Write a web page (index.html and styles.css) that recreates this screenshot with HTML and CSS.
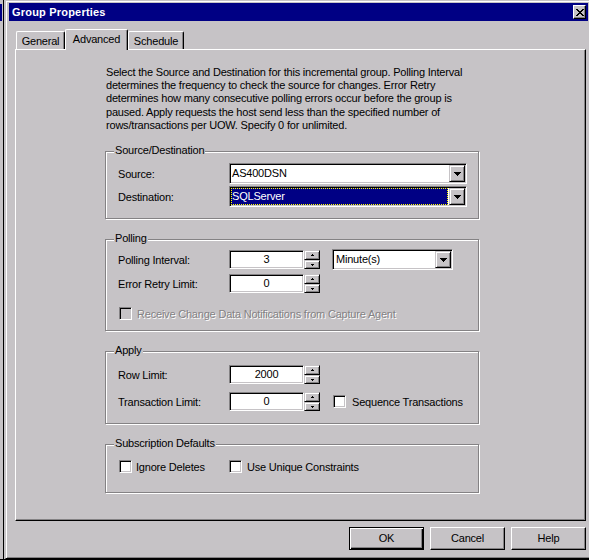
FILE: index.html
```html
<!DOCTYPE html>
<html>
<head>
<meta charset="utf-8">
<title>Group Properties</title>
<link rel="stylesheet" href="styles.css">
</head>
<body>
<div class="screen">
  <div class="behind"><div class="behind-title"></div></div>
  <div class="window">
    <div class="titlebar">
      <span class="title-text">Group Properties</span>
      <div class="close-btn">
        <svg width="8" height="7" viewBox="0 0 8 7" shape-rendering="crispEdges"><path d="M0 0h2v1H0zM6 0h2v1H6zM1 1h2v1H1zM5 1h2v1H5zM2 2h4v1H2zM3 3h2v1H3zM2 4h4v1H2zM1 5h2v1H1zM5 5h2v1H5zM0 6h2v1H0zM6 6h2v1H6z" fill="#000"/></svg>
      </div>
    </div>

    <div class="tabs">
      <div class="tab tab-general">General</div>
      <div class="tab tab-selected tab-advanced">Advanced</div>
      <div class="tab tab-schedule">Schedule</div>
    </div>

    <div class="panel">
      <div class="column">
        <p class="desc">Select the Source and Destination for this incremental group. Polling Interval<br>determines the frequency to check the source for changes. Error Retry<br>determines how many consecutive polling errors occur before the group is<br>paused. Apply requests the host send less than the specified number of<br>rows/transactions per UOW. Specify 0 for unlimited.</p>

        <div class="group group-src">
          <span class="group-label">Source/Destination</span>
          <div class="row row-combo">
            <span class="label">Source:</span>
            <div class="combo combo-wide">
              <span class="combo-text">AS400DSN</span>
              <span class="drop"><svg width="7" height="4" viewBox="0 0 7 4" shape-rendering="crispEdges"><path d="M0 0h7v1H0zM1 1h5v1H1zM2 2h3v1H2zM3 3h1v1H3z" fill="#000"/></svg></span>
            </div>
          </div>
          <div class="row row-combo">
            <span class="label">Destination:</span>
            <div class="combo combo-wide">
              <span class="combo-sel">SQLServer</span>
              <span class="drop"><svg width="7" height="4" viewBox="0 0 7 4" shape-rendering="crispEdges"><path d="M0 0h7v1H0zM1 1h5v1H1zM2 2h3v1H2zM3 3h1v1H3z" fill="#000"/></svg></span>
            </div>
          </div>
        </div>

        <div class="group group-poll">
          <span class="group-label">Polling</span>
          <div class="row row-interval">
            <span class="label">Polling Interval:</span>
            <div class="edit">3</div>
            <div class="spin">
              <span class="spin-btn spin-up"><svg width="3" height="2" viewBox="0 0 3 2" shape-rendering="crispEdges"><path d="M1 0h1v1H1zM0 1h3v1H0z" fill="#000"/></svg></span>
              <span class="spin-btn spin-down"><svg width="3" height="2" viewBox="0 0 3 2" shape-rendering="crispEdges"><path d="M0 0h3v1H0zM1 1h1v1H1z" fill="#000"/></svg></span>
            </div>
            <div class="combo combo-unit">
              <span class="combo-text combo-text-unit">Minute(s)</span>
              <span class="drop"><svg width="7" height="4" viewBox="0 0 7 4" shape-rendering="crispEdges"><path d="M0 0h7v1H0zM1 1h5v1H1zM2 2h3v1H2zM3 3h1v1H3z" fill="#000"/></svg></span>
            </div>
          </div>
          <div class="row row-retry">
            <span class="label">Error Retry Limit:</span>
            <div class="edit">0</div>
            <div class="spin">
              <span class="spin-btn spin-up"><svg width="3" height="2" viewBox="0 0 3 2" shape-rendering="crispEdges"><path d="M1 0h1v1H1zM0 1h3v1H0z" fill="#000"/></svg></span>
              <span class="spin-btn spin-down"><svg width="3" height="2" viewBox="0 0 3 2" shape-rendering="crispEdges"><path d="M0 0h3v1H0zM1 1h1v1H1z" fill="#000"/></svg></span>
            </div>
          </div>
          <div class="row row-notify">
            <span class="check check-disabled check-first"></span>
            <span class="check-text disabled-text">Receive Change Data Notifications from Capture Agent</span>
          </div>
        </div>

        <div class="group group-apply">
          <span class="group-label">Apply</span>
          <div class="row row-rowlimit">
            <span class="label">Row Limit:</span>
            <div class="edit">2000</div>
            <div class="spin">
              <span class="spin-btn spin-up"><svg width="3" height="2" viewBox="0 0 3 2" shape-rendering="crispEdges"><path d="M1 0h1v1H1zM0 1h3v1H0z" fill="#000"/></svg></span>
              <span class="spin-btn spin-down"><svg width="3" height="2" viewBox="0 0 3 2" shape-rendering="crispEdges"><path d="M0 0h3v1H0zM1 1h1v1H1z" fill="#000"/></svg></span>
            </div>
          </div>
          <div class="row row-translimit">
            <span class="label">Transaction Limit:</span>
            <div class="edit">0</div>
            <div class="spin">
              <span class="spin-btn spin-up"><svg width="3" height="2" viewBox="0 0 3 2" shape-rendering="crispEdges"><path d="M1 0h1v1H1zM0 1h3v1H0z" fill="#000"/></svg></span>
              <span class="spin-btn spin-down"><svg width="3" height="2" viewBox="0 0 3 2" shape-rendering="crispEdges"><path d="M0 0h3v1H0zM1 1h1v1H1z" fill="#000"/></svg></span>
            </div>
            <span class="check check-seq"></span>
            <span class="check-text check-text-seq">Sequence Transactions</span>
          </div>
        </div>

        <div class="group group-sub">
          <span class="group-label">Subscription Defaults</span>
          <div class="row row-subs">
            <div class="check-item">
              <span class="check check-first"></span>
              <span class="check-text check-text-ignore">Ignore Deletes</span>
            </div>
            <div class="check-item">
              <span class="check"></span>
              <span class="check-text">Use Unique Constraints</span>
            </div>
          </div>
        </div>
      </div>
    </div>

    <div class="buttons">
      <div class="btn btn-default">OK</div>
      <div class="btn">Cancel</div>
      <div class="btn">Help</div>
    </div>
  </div>
</div>
</body>
</html>
```

FILE: styles.css
```css
* { box-sizing: border-box; }

html, body {
  margin: 0;
  padding: 0;
}

body {
  background: #000;
  width: 589px;
  height: 560px;
  overflow: hidden;
  font-family: "Liberation Sans", Arial, sans-serif;
  font-size: 11px;
  letter-spacing: -0.2px;
  color: #000;
}

.screen {
  display: flex;
  width: 589px;
  height: 559px;
  overflow: hidden;
  background: #c6c3c6;
}

.behind {
  flex: none;
  width: 4px;
  height: 100%;
  margin-right: 1px;
  border-right: 1px solid #000;
}

.behind-title {
  width: 2px;
  height: 17px;
  margin-top: 4px;
  background: #000084;
}

.window {
  flex: none;
  width: 587px;
  height: 559px;
  display: flex;
  flex-direction: column;
  background: #c6c3c6;
  border: 1px solid;
  border-color: #c6c3c6 #000 #000 #c6c3c6;
  box-shadow: inset 1px 1px #fff, inset -1px -1px #848284;
  padding: 2px 3px 8px 3px;
}

/* title bar */
.titlebar {
  flex: none;
  height: 18px;
  background: #000084;
  display: flex;
  align-items: center;
  justify-content: space-between;
  padding: 0 2px 0 3px;
}

.title-text {
  color: #fff;
  font-weight: bold;
  letter-spacing: 0.2px;
}

.close-btn {
  width: 13px;
  height: 14px;
  background: #c6c3c6;
  border: 1px solid;
  border-color: #fff #000 #000 #fff;
  box-shadow: inset -1px -1px #848284;
  display: flex;
  align-items: center;
  justify-content: center;
}

.close-btn svg { display: block; }

/* tabs */
.tabs {
  flex: none;
  display: flex;
  align-items: flex-end;
  height: 20px;
  margin-top: 8px;
  padding-left: 7px;
}

.tab {
  height: 18px;
  background: #c6c3c6;
  border-top: 1px solid #fff;
  border-left: 1px solid #fff;
  border-right: 1px solid #000;
  box-shadow: inset -1px 0 #848284;
  border-radius: 2px 2px 0 0;
  display: flex;
  align-items: center;
  justify-content: center;
  white-space: nowrap;
}

.tab-general { width: 49px; }
.tab-advanced { width: 63px; }
.tab-schedule { width: 56px; }

.tab-selected {
  height: 21px;
  margin-bottom: -1px;
  padding-bottom: 3px;
  position: relative;
  z-index: 1;
}

/* panel */
.panel {
  flex: none;
  width: 571px;
  height: 472px;
  margin-left: 6px;
  border: 1px solid;
  border-color: #fff #000 #000 #fff;
  box-shadow: inset -1px -1px #848284;
  padding: 16px 0 0 89px;
}

.column { width: 374px; }

.desc {
  margin: 0 0 0 1px;
  line-height: 13.2px;
  white-space: nowrap;
}

/* group boxes */
.group {
  position: relative;
  width: 374px;
  margin-top: 20px;
  padding-left: 12px;
  border: 1px solid #848284;
  box-shadow: inset 1px 1px #fff, 1px 1px #fff;
}

.group-label {
  position: absolute;
  left: 8px;
  top: -8px;
  padding: 0 1px;
  line-height: 13px;
  background: #c6c3c6;
  white-space: nowrap;
}

.group-src {
  margin-top: 19px;
  padding-top: 11px;
  padding-bottom: 11px;
  display: flex;
  flex-direction: column;
  gap: 2px;
}

.group-poll {
  padding-top: 9px;
  padding-bottom: 10px;
}

.group-apply {
  padding-top: 13px;
  padding-bottom: 12px;
}

.group-sub {
  padding-top: 15px;
  padding-bottom: 19px;
}

.row {
  display: flex;
  align-items: center;
  white-space: nowrap;
}

.row-combo { height: 21px; }
.row-interval { height: 21px; }
.row-retry { height: 19px; margin-top: 4px; }
.row-notify { height: 13px; margin-top: 14px; }
.row-rowlimit { height: 19px; }
.row-translimit { height: 19px; margin-top: 8px; }
.row-subs { height: 13px; }

.label {
  flex: none;
  width: 111px;
}

/* combo boxes */
.combo {
  flex: none;
  height: 21px;
  display: flex;
  background: #fff;
  border: 1px solid;
  border-color: #848284 #fff #fff #848284;
  box-shadow: inset 1px 1px #000, inset -1px -1px #c6c3c6;
  padding: 1px;
}

.combo-wide { width: 238px; }
.combo-unit { width: 121px; margin-left: 12px; }

.combo-text {
  flex: 1;
  padding-left: 1px;
  line-height: 17px;
}

.combo-text-unit { padding-left: 2px; }

.combo-sel {
  flex: 1;
  margin-right: 1px;
  background: #000084;
  color: #fff;
  border: 1px dotted #ffff00;
  line-height: 15px;
}

.drop {
  flex: none;
  width: 16px;
  height: 17px;
  background: #c6c3c6;
  border: 1px solid;
  border-color: #c6c3c6 #000 #000 #c6c3c6;
  box-shadow: inset 1px 1px #fff, inset -1px -1px #848284;
  display: flex;
  align-items: center;
  justify-content: center;
}

.drop svg, .spin-btn svg { display: block; }

/* edits + spinners */
.edit {
  flex: none;
  width: 75px;
  height: 19px;
  background: #fff;
  border: 1px solid;
  border-color: #848284 #fff #fff #848284;
  box-shadow: inset 1px 1px #000, inset -1px -1px #c6c3c6;
  text-align: center;
  line-height: 17px;
}

.spin {
  flex: none;
  width: 16px;
  height: 19px;
  display: flex;
  flex-direction: column;
}

.spin-btn {
  background: #c6c3c6;
  border: 1px solid;
  border-color: #c6c3c6 #000 #000 #c6c3c6;
  box-shadow: inset 1px 1px #fff, inset -1px -1px #848284;
  display: flex;
  align-items: center;
  justify-content: center;
}

.spin-up { height: 10px; }
.spin-down { height: 9px; }

/* checkboxes */
.check {
  flex: none;
  width: 13px;
  height: 13px;
  background: #fff;
  border: 1px solid;
  border-color: #848284 #fff #fff #848284;
  box-shadow: inset 1px 1px #000, inset -1px -1px #c6c3c6;
}

.check-disabled { background: #c6c3c6; }
.check-first { margin-left: 1px; }
.check-seq { margin-left: 13px; }

.check-text { margin-left: 5px; }
.check-text-ignore { margin-left: 4px; }
.check-text-seq { margin-left: 6px; }

.disabled-text {
  color: #848284;
  text-shadow: 1px 1px 0 #fff;
}

.check-item {
  flex: none;
  width: 111px;
  display: flex;
  align-items: center;
}

/* buttons */
.buttons {
  flex: none;
  height: 23px;
  margin-top: 6px;
  padding-right: 2px;
  display: flex;
  justify-content: flex-end;
  gap: 6px;
}

.btn {
  width: 75px;
  height: 23px;
  background: #c6c3c6;
  border: 1px solid;
  border-color: #fff #000 #000 #fff;
  box-shadow: inset -1px -1px #848284;
  display: flex;
  align-items: center;
  justify-content: center;
  padding-bottom: 2px;
}

.btn-default {
  border-color: #000;
  box-shadow: inset 1px 1px #fff, inset -1px -1px #000, inset -2px -2px #848284;
}
```
